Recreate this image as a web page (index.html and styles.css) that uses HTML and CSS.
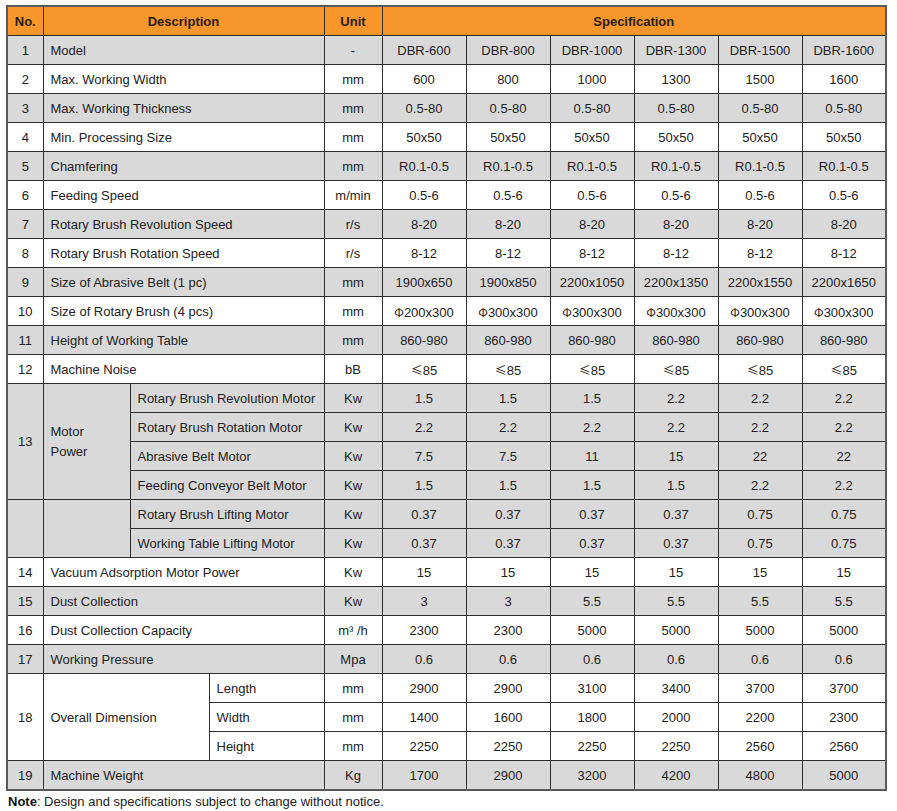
FILE: index.html
```html
<!DOCTYPE html>
<html>
<head>
<meta charset="utf-8">
<link rel="stylesheet" href="styles.css">
</head>
<body>
<div class="page">
<table class="spec">
<colgroup>
<col class="c-no"><col class="c-da"><col class="c-db"><col class="c-dc"><col class="c-unit">
<col class="c-v"><col class="c-v"><col class="c-v"><col class="c-v"><col class="c-v"><col class="c-v">
</colgroup>
<thead>
<tr class="head"><th>No.</th><th colspan="3">Description</th><th>Unit</th><th colspan="6">Specification</th></tr>
</thead>
<tbody>
<tr class="g"><td class="n">1</td><td colspan="3" class="d">Model</td><td class="u">-</td><td>DBR-600</td><td>DBR-800</td><td>DBR-1000</td><td>DBR-1300</td><td>DBR-1500</td><td>DBR-1600</td></tr>
<tr><td class="n">2</td><td colspan="3" class="d">Max. Working Width</td><td class="u">mm</td><td>600</td><td>800</td><td>1000</td><td>1300</td><td>1500</td><td>1600</td></tr>
<tr class="g"><td class="n">3</td><td colspan="3" class="d">Max. Working Thickness</td><td class="u">mm</td><td>0.5-80</td><td>0.5-80</td><td>0.5-80</td><td>0.5-80</td><td>0.5-80</td><td>0.5-80</td></tr>
<tr><td class="n">4</td><td colspan="3" class="d">Min. Processing Size</td><td class="u">mm</td><td>50x50</td><td>50x50</td><td>50x50</td><td>50x50</td><td>50x50</td><td>50x50</td></tr>
<tr class="g"><td class="n">5</td><td colspan="3" class="d">Chamfering</td><td class="u">mm</td><td>R0.1-0.5</td><td>R0.1-0.5</td><td>R0.1-0.5</td><td>R0.1-0.5</td><td>R0.1-0.5</td><td>R0.1-0.5</td></tr>
<tr><td class="n">6</td><td colspan="3" class="d">Feeding Speed</td><td class="u">m/min</td><td>0.5-6</td><td>0.5-6</td><td>0.5-6</td><td>0.5-6</td><td>0.5-6</td><td>0.5-6</td></tr>
<tr class="g"><td class="n">7</td><td colspan="3" class="d">Rotary Brush Revolution Speed</td><td class="u">r/s</td><td>8-20</td><td>8-20</td><td>8-20</td><td>8-20</td><td>8-20</td><td>8-20</td></tr>
<tr><td class="n">8</td><td colspan="3" class="d">Rotary Brush Rotation Speed</td><td class="u">r/s</td><td>8-12</td><td>8-12</td><td>8-12</td><td>8-12</td><td>8-12</td><td>8-12</td></tr>
<tr class="g"><td class="n">9</td><td colspan="3" class="d">Size of Abrasive Belt (1 pc)</td><td class="u">mm</td><td>1900x650</td><td>1900x850</td><td>2200x1050</td><td>2200x1350</td><td>2200x1550</td><td>2200x1650</td></tr>
<tr><td class="n">10</td><td colspan="3" class="d">Size of Rotary Brush (4 pcs)</td><td class="u">mm</td><td><span class="sym">Φ</span>200x300</td><td><span class="sym">Φ</span>300x300</td><td><span class="sym">Φ</span>300x300</td><td><span class="sym">Φ</span>300x300</td><td><span class="sym">Φ</span>300x300</td><td><span class="sym">Φ</span>300x300</td></tr>
<tr class="g"><td class="n">11</td><td colspan="3" class="d">Height of Working Table</td><td class="u">mm</td><td>860-980</td><td>860-980</td><td>860-980</td><td>860-980</td><td>860-980</td><td>860-980</td></tr>
<tr><td class="n">12</td><td colspan="3" class="d">Machine Noise</td><td class="u">bB</td><td><span class="sym">≤</span>85</td><td><span class="sym">≤</span>85</td><td><span class="sym">≤</span>85</td><td><span class="sym">≤</span>85</td><td><span class="sym">≤</span>85</td><td><span class="sym">≤</span>85</td></tr>
<tr class="g"><td class="n" rowspan="4">13</td><td class="d tall" rowspan="4">Motor<br>Power</td><td colspan="2" class="d">Rotary Brush Revolution Motor</td><td class="u">Kw</td><td>1.5</td><td>1.5</td><td>1.5</td><td>2.2</td><td>2.2</td><td>2.2</td></tr>
<tr class="g"><td colspan="2" class="d">Rotary Brush Rotation Motor</td><td class="u">Kw</td><td>2.2</td><td>2.2</td><td>2.2</td><td>2.2</td><td>2.2</td><td>2.2</td></tr>
<tr class="g"><td colspan="2" class="d">Abrasive Belt Motor</td><td class="u">Kw</td><td>7.5</td><td>7.5</td><td>11</td><td>15</td><td>22</td><td>22</td></tr>
<tr class="g"><td colspan="2" class="d">Feeding Conveyor Belt Motor</td><td class="u">Kw</td><td>1.5</td><td>1.5</td><td>1.5</td><td>1.5</td><td>2.2</td><td>2.2</td></tr>
<tr class="g"><td class="n" rowspan="2"></td><td class="d" rowspan="2"></td><td colspan="2" class="d">Rotary Brush Lifting Motor</td><td class="u">Kw</td><td>0.37</td><td>0.37</td><td>0.37</td><td>0.37</td><td>0.75</td><td>0.75</td></tr>
<tr class="g"><td colspan="2" class="d">Working Table Lifting Motor</td><td class="u">Kw</td><td>0.37</td><td>0.37</td><td>0.37</td><td>0.37</td><td>0.75</td><td>0.75</td></tr>
<tr><td class="n">14</td><td colspan="3" class="d">Vacuum Adsorption Motor Power</td><td class="u">Kw</td><td>15</td><td>15</td><td>15</td><td>15</td><td>15</td><td>15</td></tr>
<tr class="g"><td class="n">15</td><td colspan="3" class="d">Dust Collection</td><td class="u">Kw</td><td>3</td><td>3</td><td>5.5</td><td>5.5</td><td>5.5</td><td>5.5</td></tr>
<tr><td class="n">16</td><td colspan="3" class="d">Dust Collection Capacity</td><td class="u">m³ /h</td><td>2300</td><td>2300</td><td>5000</td><td>5000</td><td>5000</td><td>5000</td></tr>
<tr class="g"><td class="n">17</td><td colspan="3" class="d">Working Pressure</td><td class="u">Mpa</td><td>0.6</td><td>0.6</td><td>0.6</td><td>0.6</td><td>0.6</td><td>0.6</td></tr>
<tr><td class="n" rowspan="3">18</td><td colspan="2" rowspan="3" class="d">Overall Dimension</td><td class="d">Length</td><td class="u">mm</td><td>2900</td><td>2900</td><td>3100</td><td>3400</td><td>3700</td><td>3700</td></tr>
<tr><td class="d">Width</td><td class="u">mm</td><td>1400</td><td>1600</td><td>1800</td><td>2000</td><td>2200</td><td>2300</td></tr>
<tr><td class="d">Height</td><td class="u">mm</td><td>2250</td><td>2250</td><td>2250</td><td>2250</td><td>2560</td><td>2560</td></tr>
<tr class="g"><td class="n">19</td><td colspan="3" class="d">Machine Weight</td><td class="u">Kg</td><td>1700</td><td>2900</td><td>3200</td><td>4200</td><td>4800</td><td>5000</td></tr>
</tbody>
</table>
<p class="note"><b>Note</b>: Design and specifications subject to change without notice.</p>
</div>
</body>
</html>
```
FILE: styles.css
```css
html, body {
  margin: 0;
  padding: 0;
  background: #ffffff;
}
.page {
  padding: 5px 0 0 6px;
  font-family: "Liberation Sans", Arial, "Noto Sans CJK SC", sans-serif;
  font-size: 13px;
  color: #222222;
}
.spec {
  border-collapse: collapse;
  table-layout: fixed;
  width: 881px;
  border: 2px solid #5a5a5a;
}
.c-no { width: 36px; }
.c-da { width: 87px; }
.c-db { width: 79px; }
.c-dc { width: 115px; }
.c-unit { width: 58px; }
.c-v { width: 84px; }
.spec th, .spec td {
  border: 1px solid #2e2e2e;
  height: 28px;
  padding: 0;
  text-align: center;
  vertical-align: middle;
  white-space: nowrap;
}
.spec th {
  background: #f7962b;
  color: #2b1d10;
  font-weight: bold;
}
.spec td.d {
  text-align: left;
  padding-left: 7px;
}
.spec td.tall {
  line-height: 20px;
}
.spec tr.g td {
  background: #d9d9d9;
}
.sym {
  font-family: "Noto Sans CJK SC", sans-serif;
  font-size: 12px;
}
.note {
  margin: 3px 0 0 2px;
  font-size: 13px;
  color: #222;
}
.note b {
  color: #111;
}
```
